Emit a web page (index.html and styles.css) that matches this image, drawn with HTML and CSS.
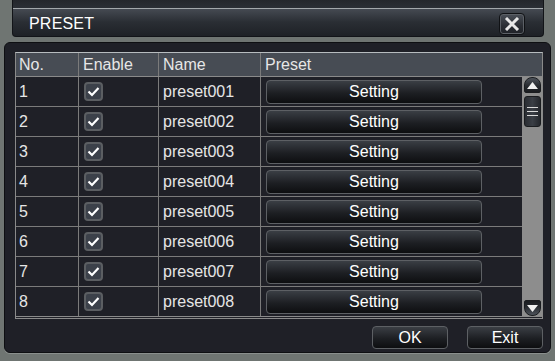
FILE: index.html
```html
<!DOCTYPE html>
<html lang="en">

<head>
    <meta charset="UTF-8">
    <title>PRESET</title>
    <link rel="stylesheet" href="styles.css">
</head>

<body>
    <div class="window">
        <div class="titlebar">
            <span class="title">PRESET</span>
            <div class="close-btn">
                <svg width="16" height="14" viewBox="0 0 16 14">
                    <path d="M2 1 L14 13 M14 1 L2 13" stroke="#e8e8e8" stroke-width="3" fill="none" />
                </svg>
            </div>
        </div>

        <div class="panel">
            <div class="table">
                <div class="row head">
                    <div class="cell">No.</div>
                    <div class="cell">Enable</div>
                    <div class="cell">Name</div>
                    <div class="cell last">Preset</div>
                </div>
                <div class="body">
                    <div class="rows" id="rows"></div>
                    <div class="scroll">
                        <div class="sb-up">
                            <svg width="11" height="7" viewBox="0 0 11 7"><path d="M0 7 L5.5 0 L11 7 Z" fill="#f0f0f0" /></svg>
                        </div>
                        <div class="sb-thumb">
                            <span></span><span></span><span></span>
                        </div>
                        <div class="sb-space"></div>
                        <div class="sb-down">
                            <svg width="11" height="7" viewBox="0 0 11 7"><path d="M0 0 L5.5 7 L11 0 Z" fill="#f0f0f0" /></svg>
                        </div>
                    </div>
                </div>
            </div>

            <div class="footer">
                <div class="btn">OK</div>
                <div class="btn">Exit</div>
            </div>
        </div>
    </div>

    <script>
        // build the 8 preset rows
        var rows = document.getElementById('rows');
        for (var i = 1; i <= 8; i++) {
            var name = 'preset' + ('00' + i).slice(-3);
            rows.innerHTML +=
                '<div class="row">' +
                '<div class="cell">' + i + '</div>' +
                '<div class="cell"><div class="check"><svg width="13" height="11" viewBox="0 0 13 11">' +
                '<path d="M1.5 5.5 L5 9 L11.5 2" stroke="#ffffff" stroke-width="2.2" fill="none" /></svg></div></div>' +
                '<div class="cell">' + name + '</div>' +
                '<div class="cell last"><div class="setting">Setting</div></div>' +
                '</div>';
        }
    </script>
</body>

</html>
```

FILE: styles.css
```css
body {
    margin: 0;
    background-color: #6f7572;
    font-family: "Liberation Sans", Arial, sans-serif;
    font-size: 16px;
    color: #e6e6e6;
    width: 555px;
    height: 361px;
    overflow: hidden;
}

.window {
    display: flex;
    flex-direction: column;
    height: 361px;
}

.titlebar {
    height: 37px;
    margin: 0 11px 0 12px;
    box-sizing: border-box;
    border: 1px solid #121418;
    border-top: none;
    border-radius: 0 0 4px 4px;
    background: linear-gradient(to bottom, #24272c 0, #2b2f35 8px, #a3a8ab 8px, #a3a8ab 9px, #454a52 9px, #2a2e34 22px, #1e2126 100%);
    display: flex;
    align-items: center;
    justify-content: space-between;
    padding: 11px 18px 0 16px;
}

.title {
    color: #ffffff;
    letter-spacing: 0.2px;
}

.close-btn {
    width: 26px;
    height: 22px;
    box-sizing: border-box;
    border: 1px solid #101215;
    border-radius: 4px;
    background: linear-gradient(to bottom, #4a4f57, #2a2d33 60%, #1f2227);
    box-shadow: inset 0 0 0 1px #5c6066;
    display: flex;
    align-items: center;
    justify-content: center;
}

.panel {
    margin: 5px 4px 0 4px;
    height: 311px;
    box-sizing: border-box;
    border: 1px solid #0e0f12;
    border-radius: 6px;
    background-color: #1f2027;
    padding: 9px 7px 0 10px;
    box-shadow: 0 1px 0 #8a8f8d;
}

.table {
    border: 1px solid #8a8a8a;
    border-top-color: #b7bcbf;
    border-bottom: 3px double #8a8a8a;
}

.row {
    display: grid;
    grid-template-columns: 63px 80px 102px 1fr;
    height: 30px;
    box-sizing: border-box;
    border-bottom: 1px solid #7b7b7b;
}

.row:last-child {
    border-bottom: none;
    height: 29px;
}

.head {
    height: 24px;
    background-color: #474c54;
    border-bottom: 1px solid #8a8a8a;
}

.cell {
    border-right: 1px solid #7b7b7b;
    display: flex;
    align-items: center;
    padding-left: 4px;
}

.row .cell:first-child {
    padding-left: 3px;
}

.cell.last {
    border-right: none;
}

.body {
    display: flex;
}

.rows {
    flex: 1;
}

.check {
    width: 19px;
    height: 19px;
    box-sizing: border-box;
    border: 2px solid #5b5e62;
    border-radius: 4px;
    background-color: #3c414a;
    display: flex;
    align-items: center;
    justify-content: center;
    margin-left: 1px;
}

.setting,
.btn {
    box-sizing: border-box;
    border: 1px solid #5d6064;
    border-radius: 4px;
    background: linear-gradient(to bottom, #3a3e44, #1d1f23 55%, #0d0e10);
    color: #ffffff;
    display: flex;
    align-items: center;
    justify-content: center;
}

.setting {
    width: 216px;
    height: 24px;
    margin-left: 1px;
}

.scroll {
    width: 20px;
    background-color: #8d8d8d;
    display: flex;
    flex-direction: column;
    padding-left: 2px;
    box-sizing: border-box;
}

.sb-up,
.sb-down,
.sb-thumb {
    width: 17px;
    box-sizing: border-box;
    border: 1px solid #1a1c1f;
    background: linear-gradient(to bottom, #4d525a, #25282d 60%, #1a1c20);
    display: flex;
    align-items: center;
    justify-content: center;
}

.sb-up {
    height: 16px;
    border-radius: 8px 8px 2px 2px;
}

.sb-down {
    height: 16px;
    border-radius: 2px 2px 8px 8px;
    background: linear-gradient(to top, #4d525a, #25282d 60%, #1a1c20);
}

.sb-thumb {
    height: 31px;
    margin-top: 3px;
    border-radius: 3px;
    flex-direction: column;
    gap: 3px;
    background: linear-gradient(to right, #2a2d33, #3a3e45 50%, #24272c);
}

.sb-thumb span {
    width: 11px;
    height: 1px;
    background-color: #d8d8d8;
}

.sb-space {
    flex: 1;
}

.footer {
    display: flex;
    justify-content: flex-end;
    gap: 19px;
    margin-top: 7px;
}

.btn {
    width: 76px;
    height: 23px;
}
```
